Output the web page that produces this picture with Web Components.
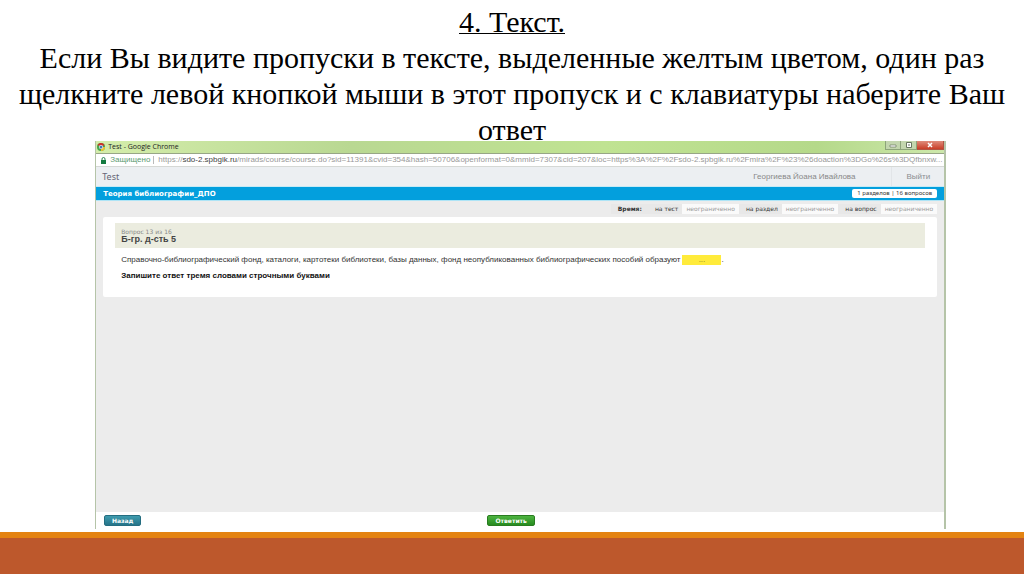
<!DOCTYPE html>
<html lang="ru">
<head>
<meta charset="utf-8">
<meta name="viewport" content="width=device-width, initial-scale=1">
<title>4. Текст</title>
<style>
  html, body { margin: 0; min-height: 100%; background: #fff; }
</style>
</head>
<body>
<lesson-slide>
  <slide-title slot="title">
    <span slot="heading">4. Текст.</span>
    Если Вы видите пропуски в тексте, выделенные желтым цветом, один раз щелкните левой кнопкой мыши в этот пропуск и с клавиатуры наберите Ваш ответ
  </slide-title>
  <browser-window caption="Test - Google Chrome">
    <browser-address slot="address" host="sdo-2.spbgik.ru" path="/mirads/course/course.do?sid=11391&amp;cvid=354&amp;hash=50706&amp;openformat=0&amp;mmid=7307&amp;cid=207&amp;loc=https%3A%2F%2Fsdo-2.spbgik.ru%2Fmira%2F%23%26doaction%3DGo%26s%3DQfbnxw..."></browser-address>
    <test-header user="Георгиева Йоана Ивайлова">Test</test-header>
    <course-bar summary="1 разделов | 16 вопросов">Теория библиографии_ДПО</course-bar>
    <time-limits></time-limits>
    <question-card number="Вопрос 13 из 16" name="Б-гр. д-сть 5">
      <span slot="text">Справочно-библиографический фонд, каталоги, картотеки библиотеки, базы данных, фонд неопубликованных библиографических пособий образуют</span>
      <span slot="hint">Запишите ответ тремя словами строчными буквами</span>
    </question-card>
    <test-actions slot="footer"></test-actions>
  </browser-window>
</lesson-slide>

<script>
const define = (name, html) => {
  const template = document.createElement('template');
  template.innerHTML = html;
  customElements.define(name, class extends HTMLElement {
    constructor() {
      super();
      this.attachShadow({ mode: 'open' }).append(template.content.cloneNode(true));
    }
    connectedCallback() {
      this.shadowRoot.querySelectorAll('[data-from]').forEach(node => {
        node.textContent = this.getAttribute(node.dataset.from) || '';
      });
    }
  });
};

define('lesson-slide', `
  <style>
    :host { display: flex; flex-direction: column; min-height: 100vh; color: #000; background: #fff; }
    main { flex: 1; display: flex; flex-direction: column; padding-bottom: 3px; }
    .window { flex: 1; display: flex; flex-direction: column; width: 83.1%; margin-left: 9.3%; }
    footer { height: 36px; border-top: 6px solid #e48312; background: #bd582c; }
  </style>
  <main>
    <slot name="title"></slot>
    <div class="window"><slot></slot></div>
  </main>
  <footer></footer>`);

define('slide-title', `
  <style>
    :host { display: block; margin-bottom: -7px; padding: 4px 8px 0; text-align: center; font: 30px/36px "Liberation Serif", serif; }
    h1, p { margin: 0; font: inherit; }
    h1 { text-decoration: underline; text-decoration-thickness: 1px; }
  </style>
  <h1><slot name="heading"></slot></h1>
  <p><slot></slot></p>`);

define('browser-window', `
  <style>
    :host { flex: 1; display: flex; flex-direction: column; box-sizing: border-box; border: solid #b5c4a8; border-width: 0 2px 0 1px; background: #ececec; font: 8px/10px "Liberation Sans", sans-serif; color: #333; }
    header { display: flex; align-items: center; height: 12px; padding-left: 1px; gap: 3px; background: linear-gradient(90deg, #d4edab, #b9d892 30%, #c0e392 60%, #b5d98a 85%, #cde8ab); border-bottom: 1px solid #97a686; color: #222; font: 7px/8px "Open Sans", sans-serif; }
    svg { display: block; width: 8px; height: 8px; }
    .caption { flex: 1; }
    .controls { display: flex; align-self: flex-start; }
    button { display: flex; align-items: center; justify-content: center; width: 16px; height: 9px; margin: 0; padding: 0; border: 1px solid #8da47a; border-top: 0; background: #c3d6ae; }
    button + button { border-left: 0; }
    button.close { width: 27px; border-color: #b05443; background: linear-gradient(#df8c7b, #c93e27); }
    .content { flex: 1; }
  </style>
  <header>
    <svg viewBox="0 0 16 16" aria-hidden="true"><circle cx="8" cy="8" r="8" fill="#47a64b"/><path d="M8 8 1 4A8 8 0 0 1 15 4Z" fill="#ce3329"/><path d="M8 8h8A8 8 0 0 1 8 16Z" fill="#efc433"/><circle cx="8" cy="8" r="4" fill="#fff"/><circle cx="8" cy="8" r="3" fill="#4379b7"/></svg>
    <span class="caption" data-from="caption"></span>
    <span class="controls">
      <button type="button" aria-label="Свернуть"><svg viewBox="0 0 8 8" aria-hidden="true"><path d="M1 4h6v2H1z" fill="#fff" stroke="#687660" stroke-width=".7"/></svg></button>
      <button type="button" aria-label="Развернуть"><svg viewBox="0 0 8 8" aria-hidden="true"><path d="M1.500 1.500h5v5h-5z" fill="#fff" stroke="#687660"/><path d="M3 3.500h2v1H3z" fill="#687660"/></svg></button>
      <button type="button" class="close" aria-label="Закрыть"><svg viewBox="0 0 8 8" aria-hidden="true"><path d="m2 2 4 4m0-4L2 6" stroke="#fff" stroke-width="1.500"/></svg></button>
    </span>
  </header>
  <slot name="address"></slot>
  <div class="content"><slot></slot></div>
  <slot name="footer"></slot>`);

define('browser-address', `
  <style>
    :host { display: flex; align-items: center; height: 12px; padding: 0 0 0 5px; background: #fff; border-bottom: 1px solid #d5d8d5; font: 8px/12px "Liberation Sans", sans-serif; color: #999; white-space: nowrap; }
    svg { width: 5px; height: 7px; }
    .secure { padding: 0 3px 0 4px; color: #5b9a72; }
    .url { flex: 1; min-width: 0; padding-left: 4px; }
    i { width: 1px; height: 8px; background: #bbb; }
    b { font-weight: 400; color: #444; }
  </style>
  <svg viewBox="0 0 5 7" aria-hidden="true"><path d="M0 3h5v4H0z" fill="#147a40"/><path d="M1 3V2a1.500 1.500 0 0 1 3 0v1" fill="none" stroke="#147a40" stroke-width=".9"/></svg>
  <span class="secure">Защищено</span><i></i>
  <div class="url">https://<b data-from="host"></b><span data-from="path"></span></div>`);

define('test-header', `
  <style>
    :host { display: flex; align-items: center; height: 19px; padding: 0 14px 0 6px; background: #eceff2; border-bottom: 1px solid #c7eaf5; font: 8px/12px "Liberation Sans", sans-serif; color: #888; }
    .name { flex: 1; font: 9px/12px "Noto Sans", sans-serif; color: #667; }
    .user { padding-right: 36px; }
    .split { align-self: stretch; width: 1px; margin-right: 14px; background: #e2e5e8; }
    a { color: #8b8e91; text-decoration: none; }
  </style>
  <span class="name"><slot></slot></span>
  <span class="user" data-from="user"></span><i class="split"></i>
  <a href="#exit">Выйти</a>`);

define('course-bar', `
  <style>
    :host { display: flex; align-items: center; justify-content: space-between; height: 13px; padding: 0 7px; background: #039fdd; border-bottom: 1px solid #aee4f6; color: #fff; }
    h2 { margin: 0; font: bold 7px/12px "DejaVu Sans", sans-serif; }
    span { padding: 0 5px; border-radius: 2px; background: #fff; color: #333; font: 6px/9px "Noto Sans", sans-serif; }
  </style>
  <h2><slot></slot></h2>
  <span data-from="summary"></span>`);

define('time-limits', `
  <style>
    :host { display: flex; justify-content: flex-end; height: 16px; padding-right: 7px; font: 6px/10px "DejaVu Sans", sans-serif; color: #333; }
    dl { display: flex; height: 10px; margin: 3px 0 0; }
    dt, dd { margin: 0; padding: 0 4px; white-space: nowrap; }
    dt { padding-left: 7px; background: #e8e8e8; }
    dt.title { padding-right: 6px; font-weight: bold; }
    dd { background: #fafafa; color: #999; }
  </style>
  <dl>
    <dt class="title">Время:</dt>
    <dt>на тест</dt><dd>неограниченно</dd>
    <dt>на раздел</dt><dd>неограниченно</dd>
    <dt>на вопрос</dt><dd>неограниченно</dd>
  </dl>`);

define('question-card', `
  <style>
    :host { display: block; box-sizing: border-box; height: 80px; margin: 0 7px; padding: 6px 12px 0; border-radius: 2px; background: #fff; }
    header { display: flex; flex-direction: column; justify-content: center; height: 25px; padding-left: 6px; background: #ebecdf; }
    small { font: 6px/7px "DejaVu Sans", sans-serif; color: #888; }
    h3 { margin: 0; font: bold 9px/9px "Liberation Sans", sans-serif; color: #444; }
    .task { display: grid; gap: 6px; padding: 7px 0 0 6px; white-space: nowrap; font: 8px/10px "Liberation Sans", sans-serif; }
    p { display: flex; align-items: center; margin: 0; }
    label { padding-right: 2px; }
    input { box-sizing: border-box; width: 39px; height: 10px; margin: 0; padding: 0; border: 0; background: #ffeb3b; color: #8a7d20; font: inherit; text-align: center; }
    .hint { color: #111; font-weight: bold; }
  </style>
  <header><small data-from="number"></small><h3 data-from="name"></h3></header>
  <div class="task">
    <p><label for="gap"><slot name="text"></slot></label><input id="gap" type="text" value="..."><span>.</span></p>
    <p class="hint"><slot name="hint"></slot></p>
  </div>`);

define('test-actions', `
  <style>
    :host { display: grid; grid-template-columns: 1fr auto 1fr; align-items: center; height: 17px; padding: 0 26px 0 8px; background: #fff; }
    button { box-sizing: border-box; height: 11px; margin: 0; padding: 0; border: 1px solid #246d80; border-radius: 2px; background: linear-gradient(#3e9bae, #267489); color: #fff; font: bold 6px/8px "DejaVu Sans", sans-serif; }
    .back { width: 37px; }
    .answer { width: 48px; border-color: #297c20; background: linear-gradient(#4db43f, #278b20); }
  </style>
  <button type="button" class="back">Назад</button>
  <button type="submit" class="answer">Ответить</button>`);
</script>
</body>
</html>
